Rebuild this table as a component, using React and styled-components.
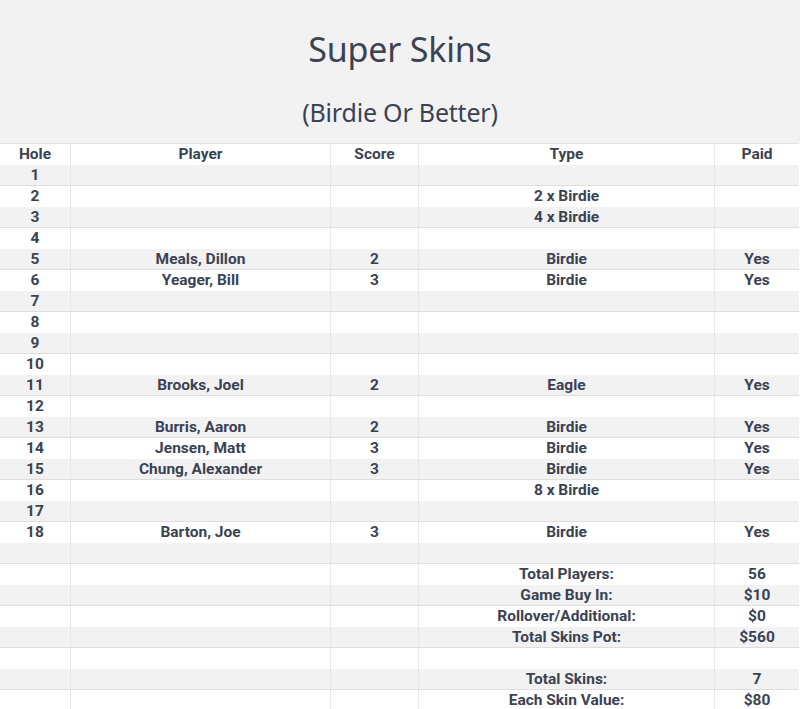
import React from "react";
import styled, { createGlobalStyle } from "styled-components";

const Global = createGlobalStyle`
  html, body { margin: 0; padding: 0; background: #ffffff; }
  body { font-family: "Roboto", "Liberation Sans", sans-serif; color: #3b4352; }
`;

const Page = styled.div`
  width: 800px;
`;

const Header = styled.header`
  background: #f2f2f2;
  height: 143px;
  display: flex;
  flex-direction: column;
  align-items: center;
  box-sizing: border-box;
  padding-top: 27px;
`;

const Title = styled.h1`
  margin: 0;
  font-family: "Noto Sans", "Open Sans", sans-serif;
  font-weight: 400;
  font-size: 34px;
  line-height: 44px;
  color: #3b4352;
  letter-spacing: -0.2px;
`;

const Subtitle = styled.h2`
  margin: 26px 0 0;
  font-family: "Noto Sans", "Open Sans", sans-serif;
  font-weight: 400;
  font-size: 25px;
  line-height: 30px;
  color: #3b4352;
  letter-spacing: -0.2px;
`;

const Table = styled.div`
  width: 799px;
  border-top: 1px solid #e2e2e2;
`;

const Row = styled.div`
  display: grid;
  grid-template-columns: 71px 260px 88px 296px 84px;
  height: 21px;
  box-sizing: border-box;
  background: ${(p) => (p.$shade ? "#f2f2f2" : "#ffffff")};
  border-bottom: ${(p) => (p.$shade ? "1px solid #dedede" : "none")};
`;

const Cell = styled.div`
  text-align: center;
  font-size: 15.5px;
  font-weight: 700;
  line-height: 20px;
  white-space: nowrap;
  border-right: ${(p) => (p.$last ? "none" : "1px solid #e6e6e6")};
  color: #3b4352;
`;

const holes = [
  ["1", "", "", "", ""],
  ["2", "", "", "2 x Birdie", ""],
  ["3", "", "", "4 x Birdie", ""],
  ["4", "", "", "", ""],
  ["5", "Meals, Dillon", "2", "Birdie", "Yes"],
  ["6", "Yeager, Bill", "3", "Birdie", "Yes"],
  ["7", "", "", "", ""],
  ["8", "", "", "", ""],
  ["9", "", "", "", ""],
  ["10", "", "", "", ""],
  ["11", "Brooks, Joel", "2", "Eagle", "Yes"],
  ["12", "", "", "", ""],
  ["13", "Burris, Aaron", "2", "Birdie", "Yes"],
  ["14", "Jensen, Matt", "3", "Birdie", "Yes"],
  ["15", "Chung, Alexander", "3", "Birdie", "Yes"],
  ["16", "", "", "8 x Birdie", ""],
  ["17", "", "", "", ""],
  ["18", "Barton, Joe", "3", "Birdie", "Yes"],
  ["", "", "", "", ""],
  ["", "", "", "Total Players:", "56"],
  ["", "", "", "Game Buy In:", "$10"],
  ["", "", "", "Rollover/Additional:", "$0"],
  ["", "", "", "Total Skins Pot:", "$560"],
  ["", "", "", "", ""],
  ["", "", "", "Total Skins:", "7"],
  ["", "", "", "Each Skin Value:", "$80"],
];

export default function App() {
  return (
    <Page>
      <Global />
      <Header>
        <Title>Super Skins</Title>
        <Subtitle>(Birdie Or Better)</Subtitle>
      </Header>
      <Table>
        <Row>
          {["Hole", "Player", "Score", "Type", "Paid"].map((h, i) => (
            <Cell key={h} $last={i === 4}>{h}</Cell>
          ))}
        </Row>
        {holes.map((r, idx) => (
          <Row key={idx} $shade={idx % 2 === 0}>
            {r.map((c, i) => (
              <Cell key={i} $last={i === 4}>{c}</Cell>
            ))}
          </Row>
        ))}
      </Table>
    </Page>
  );
}
